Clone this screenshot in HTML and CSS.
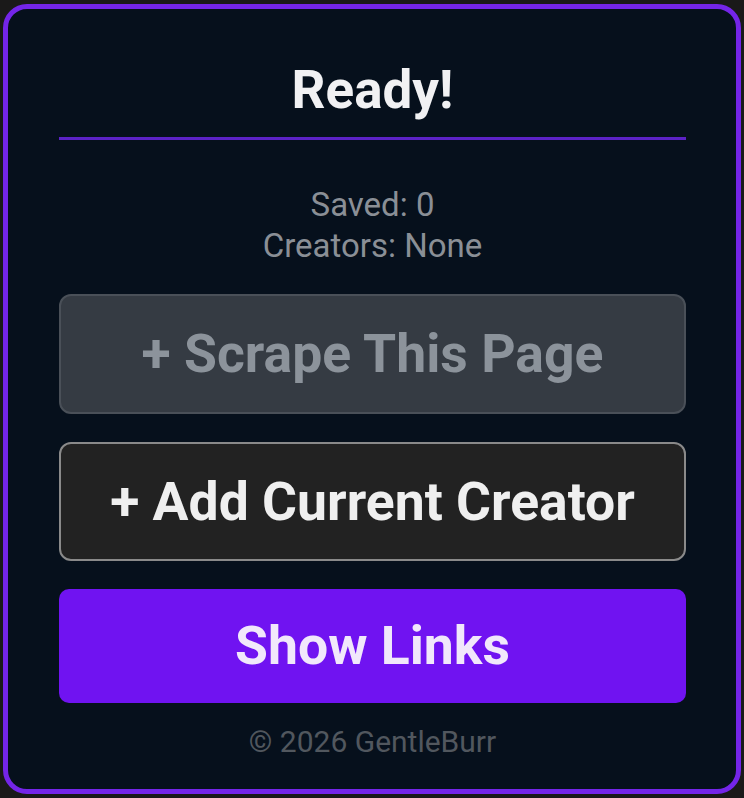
FILE: index.html
```html
<!DOCTYPE html>
<html>
<head>
<meta charset="utf-8">
<link rel="stylesheet" href="styles.css">
</head>
<body>
<div class="card">
  <h1 class="title">Ready!</h1>
  <div class="divider"></div>
  <div class="stats">
    <div>Saved: 0</div>
    <div>Creators: None</div>
  </div>
  <div class="btn btn-scrape">+ Scrape This Page</div>
  <div class="btn btn-add">+ Add Current Creator</div>
  <div class="btn btn-show">Show Links</div>
  <div class="footer">© 2026 GentleBurr</div>
</div>
</body>
</html>
```

FILE: styles.css
```css
html, body {
  margin: 0;
  padding: 0;
  background: #1a1919;
}
body {
  width: 744px;
  height: 798px;
  overflow: hidden;
  font-family: Roboto, "Noto Sans", sans-serif;
}
.card {
  box-sizing: border-box;
  margin: 4px 3px 0 3px;
  width: 738px;
  height: 790px;
  border: 5px solid #7425e8;
  border-radius: 24px;
  background: #06101c;
  padding: 55px 50px 0 51px;
  display: flex;
  flex-direction: column;
}
.title {
  margin: 0;
  font-size: 53px;
  line-height: 53px;
  font-weight: 700;
  color: #f1f1f3;
  text-align: center;
}
.divider {
  margin-top: 20px;
  height: 3px;
  background: #5c22c6;
}
.stats {
  margin-top: 44px;
  font-size: 33px;
  line-height: 41px;
  color: #8a8f96;
  text-align: center;
}
.btn {
  box-sizing: border-box;
  display: flex;
  align-items: center;
  justify-content: center;
  font-size: 53.5px;
  line-height: 54px;
  font-weight: 700;
  border-radius: 12px;
}
.btn-scrape {
  margin-top: 28px;
  height: 120px;
  background: #353b43;
  border: 2px solid #4a5058;
  color: #8c939b;
}
.btn-add {
  margin-top: 28px;
  height: 119px;
  background: #222222;
  border: 2px solid #8a8a8a;
  color: #efefef;
}
.btn-show {
  margin-top: 28px;
  height: 114px;
  background: #7013f1;
  color: #f1e8fb;
  border-radius: 10px;
}
.footer {
  margin-top: 19px;
  font-size: 30px;
  line-height: 40px;
  color: #51575e;
  text-align: center;
}
```
